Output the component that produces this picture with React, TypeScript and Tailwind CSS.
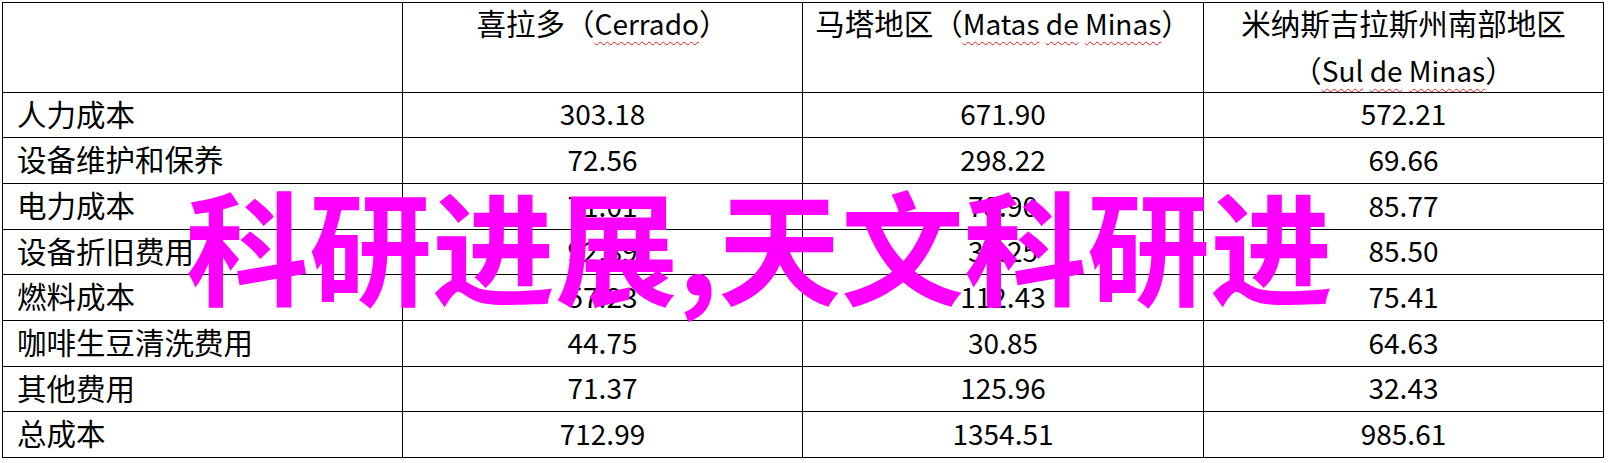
import React from "react";

const FONT = { fontFamily: '"Noto Sans CJK SC", "Liberation Sans", sans-serif' };

function W({ children }: { children: React.ReactNode }) {
  return (
    <span className="underline decoration-wavy decoration-[#e02020] decoration-1 underline-offset-[6px]">
      {children}
    </span>
  );
}

function C({ children }: { children: React.ReactNode }) {
  return <span className="text-[29.5px]">{children}</span>;
}

const rows: { label: string; v: string[]; h: string }[] = [
  { label: "人力成本", v: ["303.18", "671.90", "572.21"], h: "h-[45px]" },
  { label: "设备维护和保养", v: ["72.56", "298.22", "69.66"], h: "h-[46px]" },
  { label: "电力成本", v: ["71.01", "78.90", "85.77"], h: "h-[46px]" },
  { label: "设备折旧费用", v: ["92.89", "36.25", "85.50"], h: "h-[45px]" },
  { label: "燃料成本", v: ["57.23", "112.43", "75.41"], h: "h-[46px]" },
  { label: "咖啡生豆清洗费用", v: ["44.75", "30.85", "64.63"], h: "h-[46px]" },
  { label: "其他费用", v: ["71.37", "125.96", "32.43"], h: "h-[45px]" },
  { label: "总成本", v: ["712.99", "1354.51", "985.61"], h: "h-[46px]" },
];

export default function App() {
  return (
    <div className="relative w-[1608px] h-[463px] bg-white overflow-hidden text-black" style={FONT}>
      <div className="ml-[2px] mt-[2px] w-[1602px] border-l border-t border-black grid grid-cols-[400px_400px_401px_400px] text-[28px]">
        {/* header */}
        <div className="h-[90px] border-r border-b border-black" />
        <div className="h-[90px] border-r border-b border-black text-center leading-[38px]">
          <div>
            <C>喜拉多（</C>
            <W>Cerrado</W>
            <C>）</C>
          </div>
        </div>
        <div className="h-[90px] border-r border-b border-black text-center leading-[38px]">
          <div>
            <C>马塔地区（</C>
            <W>Matas</W> <W>de</W> <W>Minas</W>
            <C>）</C>
          </div>
        </div>
        <div className="h-[90px] border-r border-b border-black text-center leading-[38px]">
          <div>
            <C>米纳斯吉拉斯州南部地区</C>
          </div>
          <div className="mt-[8px]">
            <C>（</C>
            <W>Sul</W> <W>de</W> <W>Minas</W>
            <C>）</C>
          </div>
        </div>
        {rows.map((r) => (
          <React.Fragment key={r.label}>
            <div className={`${r.h} border-r border-b border-black flex items-center pl-[14px] pb-[4px] text-[29.5px]`}>
              {r.label}
            </div>
            {r.v.map((val, i) => (
              <div
                key={i}
                className={`${r.h} border-r border-b border-black flex items-center justify-center pb-[4px]`}
              >
                {val}
              </div>
            ))}
          </React.Fragment>
        ))}
      </div>
      <div
        className="absolute left-[186px] top-[181px] text-[123px] leading-none font-bold text-[#ff00ff] whitespace-nowrap"
        style={FONT}
      >
        科研进展,天文科研进
      </div>
    </div>
  );
}
